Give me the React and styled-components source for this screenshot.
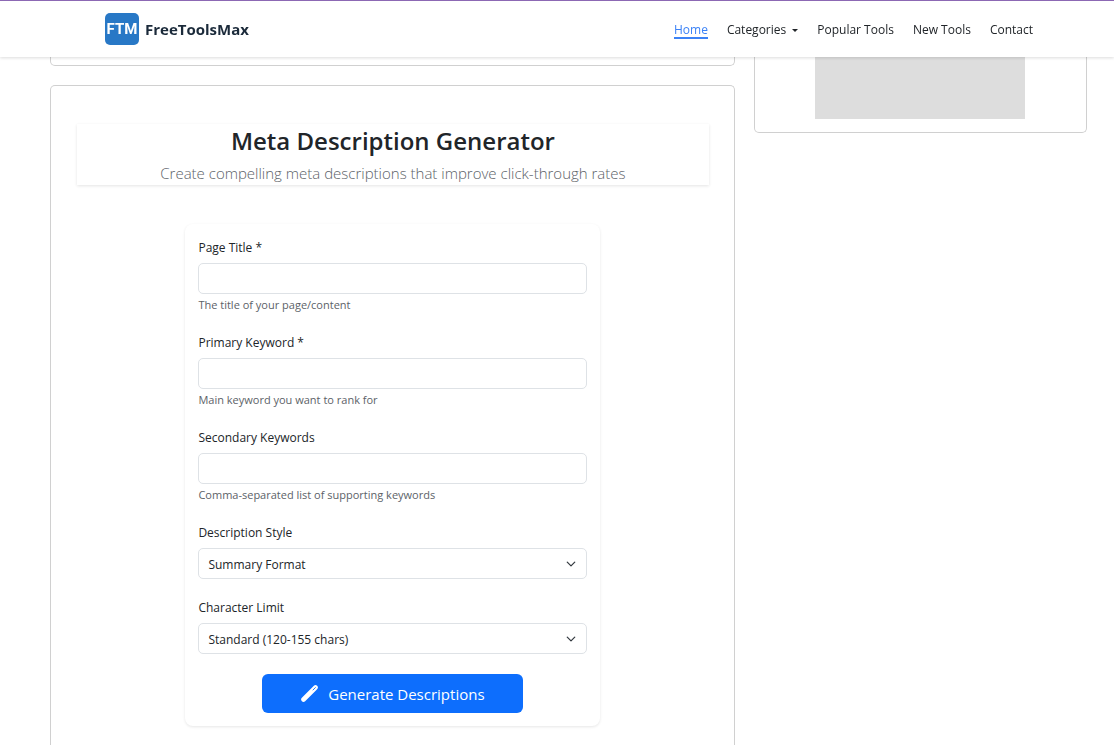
import React from "react";
import styled, { createGlobalStyle } from "styled-components";

const GlobalStyle = createGlobalStyle`
  *, *::before, *::after { box-sizing: border-box; }
  body {
    margin: 0;
    background: #fff;
    color: #212529;
    font-family: "Segoe UI", "Open Sans", "Noto Sans", sans-serif;
    font-size: 12px;
    line-height: 20px;
  }
  button, input, select { font: inherit; color: inherit; }
`;

const Page = styled.div`
  display: flex;
  flex-direction: column;
  height: 100vh;
  overflow: hidden;
`;

const Header = styled.header`
  position: sticky;
  top: 0;
  z-index: 10;
  flex: none;
  background: #fff;
  border-top: 1px solid #8c68b4;
  box-shadow: 0 1px 3px rgba(0, 0, 0, 0.14);
`;

const NavBar = styled.div`
  display: flex;
  align-items: center;
  justify-content: space-between;
  max-width: 960px;
  height: 56px;
  margin: 0 auto;
  padding: 0 4px 0 28px;
`;

const Brand = styled.a`
  display: flex;
  align-items: center;
  gap: 6px;
  color: #1b2a3a;
  font-size: 15px;
  font-weight: 700;
  text-decoration: none;
`;

const LogoMark = styled.span`
  display: flex;
  align-items: center;
  justify-content: center;
  width: 34px;
  height: 32px;
  border-radius: 5px;
  background: #2878c6;
  color: #fff;
  font-family: Roboto, "Open Sans", sans-serif;
  font-size: 15px;
  font-weight: 700;
`;

const NavLinks = styled.nav`
  display: flex;
  align-items: center;
  gap: 19px;
  padding-top: 4px;
`;

const NavLink = styled.a`
  display: flex;
  align-items: center;
  gap: 6px;
  height: 16px;
  color: ${(p) => (p.$active ? "#3b82f6" : "#212529")};
  border-bottom: 2px solid ${(p) => (p.$active ? "#3b82f6" : "transparent")};
  text-decoration: none;
  white-space: nowrap;
`;

const Caret = styled.span`
  border: 3px solid transparent;
  border-top-color: currentColor;
  border-bottom: 0;
`;

const Main = styled.main`
  flex: 1;
  min-height: 0;
  display: grid;
  grid-template-columns: minmax(0, 37fr) minmax(0, 18fr);
  gap: 19px;
  padding: 0 27px 0 50px;
`;

const Column = styled.div`
  display: flex;
  flex-direction: column;
  gap: 19px;
  min-height: 0;
`;

const IntroPanel = styled.section`
  flex: none;
  height: 9px;
  border: 1px solid #d0d0d0;
  border-top: 0;
  border-radius: 0 0 5px 5px;
`;

const ToolPanel = styled.section`
  flex: 1 0 auto;
  padding: 38px 25px 24px 26px;
  border: 1px solid #d0d0d0;
  border-bottom: 0;
  border-radius: 5px 5px 0 0;
`;

const AdPanel = styled.aside`
  align-self: start;
  display: flex;
  justify-content: center;
  padding-bottom: 13px;
  border: 1px solid #d0d0d0;
  border-top: 0;
  border-radius: 0 0 5px 5px;
`;

const AdSlot = styled.div`
  width: 210px;
  height: 62px;
  background: #ddd;
`;

const ToolHeading = styled.div`
  margin-bottom: 39px;
  text-align: center;
  box-shadow: 0 1px 3px rgba(0, 0, 0, 0.11);
`;

const Title = styled.h1`
  margin: 0 0 4px;
  font-size: 24px;
  font-weight: 600;
  line-height: 34px;
`;

const Subtitle = styled.p`
  margin: 0;
  color: #5c6268;
  font-size: 15px;
  font-weight: 300;
  line-height: 23px;
`;

const Form = styled.form`
  display: flex;
  flex-direction: column;
  gap: 19px;
  max-width: 415px;
  margin: 0 auto;
  padding: 14px 13px 13px;
  border-radius: 8px;
  box-shadow: 0 1px 3px rgba(0, 0, 0, 0.1);
`;

const Field = styled.div`
  display: flex;
  flex-direction: column;
`;

const Label = styled.label`
  margin-bottom: 5px;
`;

const TextInput = styled.input`
  width: 100%;
  height: 31px;
  padding: 0 10px;
  border: 1px solid #dee2e6;
  border-radius: 5px;
  background: #fff;
`;

const SelectBox = styled.div`
  display: grid;
  align-items: center;

  > * { grid-area: 1 / 1; }

  svg {
    justify-self: end;
    margin-right: 11px;
    pointer-events: none;
  }
`;

const Select = styled.select`
  appearance: none;
  width: 100%;
  height: 31px;
  padding: 2px 30px 0 9px;
  border: 1px solid #dee2e6;
  border-radius: 5px;
  background: #fff;
`;

const Hint = styled.small`
  margin: 2px 0 1px;
  color: #5c6268;
  font-size: 11px;
  line-height: 17px;
`;

const SubmitButton = styled.button`
  display: flex;
  align-items: center;
  justify-content: center;
  gap: 10px;
  align-self: center;
  width: 261px;
  height: 39px;
  margin-top: 1px;
  border: 0;
  border-radius: 6px;
  background: #0d6efd;
  color: #fff;
  font-size: 15px;
`;

function Chevron() {
  return (
    <svg width="10" height="10" viewBox="0 0 16 16" fill="none" stroke="#343a40" strokeWidth="2" strokeLinecap="round" strokeLinejoin="round" aria-hidden="true">
      <path d="m2 5 6 6 6-6" />
    </svg>
  );
}

function Wand() {
  return (
    <svg width="17" height="17" viewBox="0 0 17 17" fill="none" strokeLinecap="round" aria-hidden="true">
      <path d="M2.5 14.5 14.5 2.5" stroke="#fff" strokeWidth="4.6" />
      <path d="m12 5 2.4-2.4" stroke="#0d6efd" strokeWidth="0.9" />
    </svg>
  );
}

function TextField({ id, label, hint }) {
  return (
    <Field>
      <Label htmlFor={id}>{label}</Label>
      <TextInput id={id} type="text" aria-describedby={`${id}-hint`} />
      <Hint id={`${id}-hint`}>{hint}</Hint>
    </Field>
  );
}

function SelectField({ id, label, option }) {
  return (
    <Field>
      <Label htmlFor={id}>{label}</Label>
      <SelectBox>
        <Select id={id}>
          <option>{option}</option>
        </Select>
        <Chevron />
      </SelectBox>
    </Field>
  );
}

export default function App() {
  return (
    <>
      <GlobalStyle />
      <Page>
        <Header>
          <NavBar>
            <Brand href="#">
              <LogoMark>FTM</LogoMark>
              FreeToolsMax
            </Brand>
            <NavLinks>
              <NavLink href="#" $active>Home</NavLink>
              <NavLink href="#">Categories <Caret /></NavLink>
              <NavLink href="#">Popular Tools</NavLink>
              <NavLink href="#">New Tools</NavLink>
              <NavLink href="#">Contact</NavLink>
            </NavLinks>
          </NavBar>
        </Header>
        <Main>
          <Column>
            <IntroPanel />
            <ToolPanel>
              <ToolHeading>
                <Title>Meta Description Generator</Title>
                <Subtitle>Create compelling meta descriptions that improve click-through rates</Subtitle>
              </ToolHeading>
              <Form onSubmit={(e) => e.preventDefault()}>
                <TextField id="page-title" label="Page Title *" hint="The title of your page/content" />
                <TextField id="primary-keyword" label="Primary Keyword *" hint="Main keyword you want to rank for" />
                <TextField id="secondary-keywords" label="Secondary Keywords" hint="Comma-separated list of supporting keywords" />
                <SelectField id="description-style" label="Description Style" option="Summary Format" />
                <SelectField id="character-limit" label="Character Limit" option="Standard (120-155 chars)" />
                <SubmitButton type="submit">
                  <Wand />
                  Generate Descriptions
                </SubmitButton>
              </Form>
            </ToolPanel>
          </Column>
          <AdPanel>
            <AdSlot />
          </AdPanel>
        </Main>
      </Page>
    </>
  );
}
